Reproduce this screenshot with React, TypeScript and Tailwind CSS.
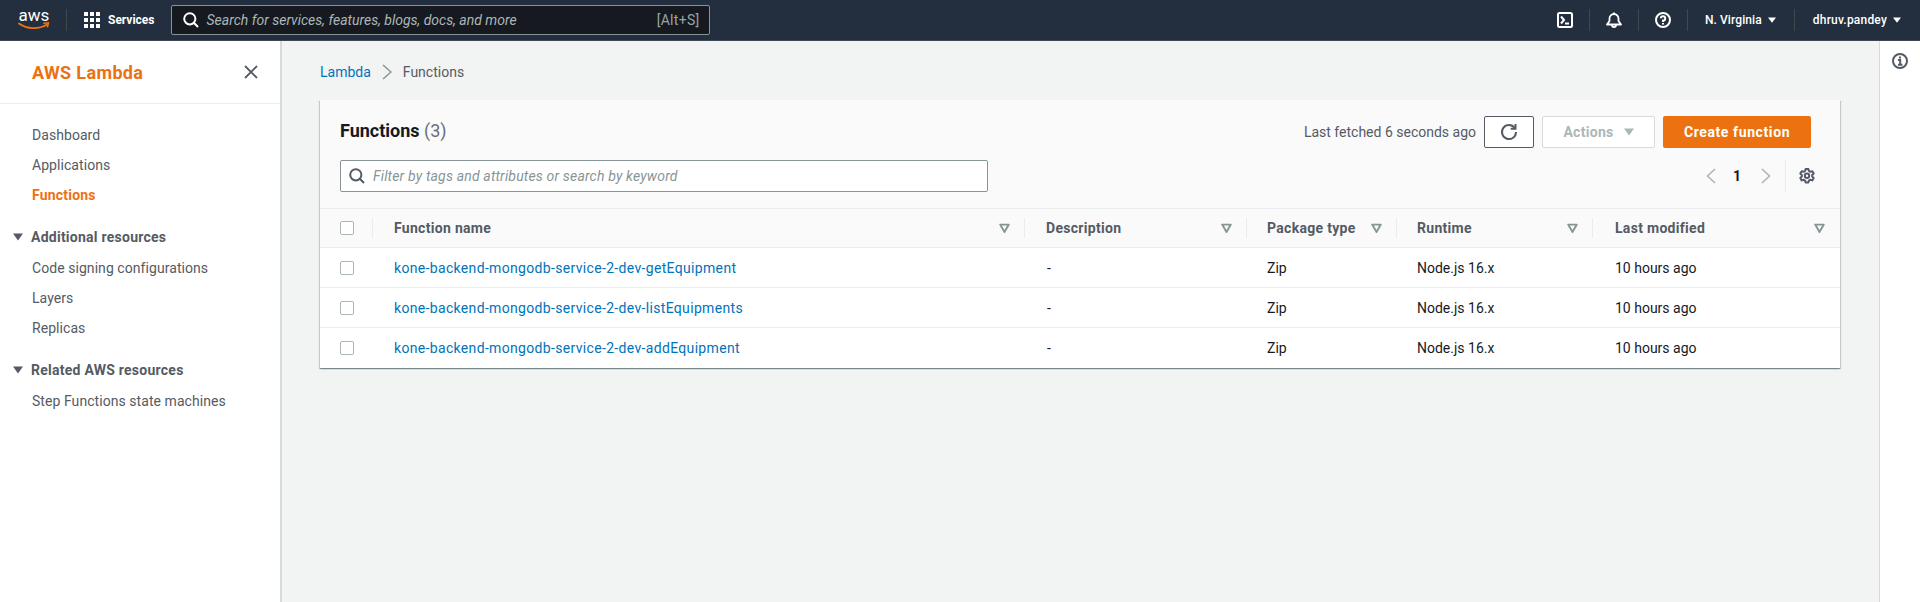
import React from "react";

const font = "font-['Roboto','Liberation_Sans',sans-serif]";
const row = "grid grid-cols-[53px_652px_222px_150px_196px_247px]";

function Caret({ className = "", small }: { className?: string; small?: boolean }) {
  return (
    <svg width={small ? 8 : 10} height={small ? 6 : 8} viewBox="0 0 10 8" preserveAspectRatio="none" className={className}>
      <path d="M0 0.5h10L5 7.5z" fill="currentColor" />
    </svg>
  );
}

function Sep() {
  return <div className="mx-[16px] h-[22px] w-px shrink-0 bg-[#414750]" />;
}

function AwsLogo() {
  return (
    <svg width="32" height="28" viewBox="0 0 32 28">
      <text x="16" y="15" textAnchor="middle" fontSize="17" fill="#fff" fontFamily="Roboto, sans-serif">aws</text>
      <path d="M1 17.5c8 6 20 6 28 1" fill="none" stroke="#ec7211" strokeWidth="1.8" strokeLinecap="round" />
      <path d="M26 17.3l4.5-.6-1 4" fill="none" stroke="#ec7211" strokeWidth="1.6" strokeLinecap="round" strokeLinejoin="round" />
    </svg>
  );
}

function GridIcon() {
  return (
    <svg width="16" height="16" viewBox="0 0 16 16" fill="#fff">
      {[0, 6, 12].flatMap((x) => [0, 6, 12].map((y) => <rect key={`${x}${y}`} x={x} y={y} width="4" height="4" />))}
    </svg>
  );
}

function SearchIcon({ color = "#fff" }: { color?: string }) {
  return (
    <svg width="16" height="16" viewBox="0 0 16 16" fill="none" stroke={color} strokeWidth="2">
      <circle cx="6.8" cy="6.8" r="5.6" />
      <path d="M10.8 10.8L15 15" />
    </svg>
  );
}

function FilterIcon() {
  return (
    <svg width="11" height="11" viewBox="0 0 11 11" fill="none" stroke="#879596" strokeWidth="1.9" className="shrink-0">
      <path d="M1.2 1.6h8.6L5.5 9z" strokeLinejoin="round" />
    </svg>
  );
}

function Check() {
  return <div className="h-[14px] w-[14px] rounded-[2px] border border-[#aab7b8] bg-white" />;
}

function Head({ label, sep = true, pad = "pl-5" }: { label: string; sep?: boolean; pad?: string }) {
  return (
    <div className={`relative flex h-[38px] items-center justify-between pr-[15px] ${pad}`}>
      <span className="text-[14px] font-bold tracking-[0.3px] text-[#545b64]">{label}</span>
      <FilterIcon />
      {sep && <div className="absolute right-0 top-[9px] h-[20px] w-px bg-[#eaeded]" />}
    </div>
  );
}

function DataRow({ name, last }: { name: string; last?: boolean }) {
  return (
    <div className={`${row} h-[40px] items-center text-[14px] text-[#16191f] ${last ? "" : "border-b border-[#eaeded] pt-px"}`}>
      <div className="pl-5"><Check /></div>
      <a className="pl-[21px] tracking-[0.33px] text-[#0073bb]">{name}</a>
      <div className="pl-[22px]">-</div>
      <div className="pl-5">Zip</div>
      <div className="pl-5">Node.js 16.x</div>
      <div className="pl-[22px]">10 hours ago</div>
    </div>
  );
}

const NavItem = ({ children, active }: { children: React.ReactNode; active?: boolean }) => (
  <div className={`flex h-[30px] items-center pl-8 text-[14px] ${active ? "font-bold tracking-[0.2px] text-[#ec7211]" : "tracking-[0.06px] text-[#545b64]"}`}>{children}</div>
);

const NavSection = ({ children }: { children: React.ReactNode }) => (
  <div className="mb-px mt-[12px] flex h-[30px] items-center pl-[13px] text-[14px] font-bold tracking-[0.25px] text-[#545b64]">
    <Caret className="mr-2" />
    {children}
  </div>
);

export default function App() {
  return (
    <div className={`${font} flex h-screen flex-col overflow-hidden bg-[#f2f3f3]`}>
      <header className="flex h-[41px] shrink-0 items-center border-b border-[#414750] bg-[#232f3e] text-white">
        <div className="ml-[18px] flex w-[32px] justify-center"><AwsLogo /></div>
        <div className="ml-[16px] h-[22px] w-px bg-[#414750]" />
        <div className="ml-[17px]"><GridIcon /></div>
        <span className="ml-2 text-[12px] font-bold">Services</span>
        <div className="ml-4 flex h-[30px] w-[539px] items-center rounded-[2px] border border-[#879596] bg-[#16191f] pl-[11px] pr-[9px] text-[14px]">
          <SearchIcon />
          <span className="ml-[8px] flex-1 italic text-[#aab7b8]">Search for services, features, blogs, docs, and more</span>
          <span className="tracking-[0.3px] text-[#95a5a6]">[Alt+S]</span>
        </div>
        <div className="ml-auto flex items-center pr-[19px] text-[12px] font-medium">
          <svg width="16" height="16" viewBox="0 0 16 16" fill="none" stroke="#fff" strokeWidth="2">
            <rect x="1" y="1" width="14" height="14" rx="1.5" />
            <path d="M4 4.5L7 8l-3 3.5M8 11.5h4" />
          </svg>
          <Sep />
          <svg width="16" height="16" viewBox="0 0 16 16" fill="none" stroke="#fff" strokeWidth="1.8">
            <path d="M1 12.5h14L12.5 9V6.5a4.5 4.5 0 00-9 0V9z" strokeLinejoin="round" />
            <path d="M6 13a2 2 0 004 0M8 .5v1.5" />
          </svg>
          <Sep />
          <svg width="16" height="16" viewBox="0 0 16 16" fill="none" stroke="#fff" strokeWidth="2">
            <circle cx="8" cy="8" r="7" />
            <path d="M5.8 6.3A2.2 2.2 0 118 8.6V10M8 11v1.6" />
          </svg>
          <Sep />
          <span className="ml-[1px] tracking-[0.1px]">N. Virginia</span>
          <Caret small className="ml-[6px] mr-[2px]" />
          <Sep />
          <span className="ml-[2px] tracking-[0.2px]">dhruv.pandey</span>
          <Caret small className="ml-[6px]" />
        </div>
      </header>

      <div className="flex min-h-0 flex-1">
        <aside className="w-[282px] shrink-0 border-r-2 border-[#d5dbdb] bg-white">
          <div className="flex h-[63px] items-center justify-between border-b border-[#eaeded] pl-8 pr-[22px]">
            <span className="text-[18px] font-bold tracking-[0.35px] text-[#ec7211]">AWS Lambda</span>
            <svg width="14" height="14" viewBox="0 0 14 14" stroke="#545b64" strokeWidth="1.8">
              <path d="M1 1l12 12M13 1L1 13" />
            </svg>
          </div>
          <nav className="pt-[16px]">
            <NavItem>Dashboard</NavItem>
            <NavItem>Applications</NavItem>
            <NavItem active>Functions</NavItem>
            <NavSection>Additional resources</NavSection>
            <NavItem>Code signing configurations</NavItem>
            <NavItem>Layers</NavItem>
            <NavItem>Replicas</NavItem>
            <NavSection>Related AWS resources</NavSection>
            <NavItem>Step Functions state machines</NavItem>
          </nav>
        </aside>

        <main className="min-w-0 flex-1 px-[38px] pt-[21px]">
          <nav className="flex h-[20px] items-center text-[14px]">
            <span className="text-[#0073bb]">Lambda</span>
            <svg width="10" height="16" viewBox="0 0 10 16" fill="none" stroke="#879596" strokeWidth="1.5" className="mx-[11px]">
              <path d="M1 1l8 7-8 7" />
            </svg>
            <span className="text-[#545b64]">Functions</span>
          </nav>
          <section className="mt-[18px] w-[1520px] bg-white shadow-[0_1px_1px_0_rgba(0,28,36,0.3),1px_1px_1px_0_rgba(0,28,36,0.15),-1px_1px_1px_0_rgba(0,28,36,0.15)]">
            <div className="h-[109px] border-b border-[#eaeded] bg-[#fafafa] pl-5 pr-[29px]">
              <div className="flex items-start justify-between pt-4">
                <h1 className="pt-[4px] text-[18px] font-bold leading-[22px] text-[#16191f]">
                  Functions <span className="font-normal text-[#687078]">(3)</span>
                </h1>
                <div className="flex items-center">
                  <span className="mr-2 text-[14px] text-[#545b64]">Last fetched 6 seconds ago</span>
                  <button className="flex h-[32px] w-[50px] items-center justify-center rounded-[2px] border border-[#545b64] bg-white">
                    <svg width="18" height="18" viewBox="0 0 18 18" fill="none" stroke="#545b64" strokeWidth="2">
                      <path d="M14.7 5A7 7 0 1016 9" />
                      <path d="M15.5 1v4.8h-4.8" />
                    </svg>
                  </button>
                  <button className="ml-2 flex h-[32px] w-[113px] items-center justify-center rounded-[2px] border border-[#d5dbdb] bg-white text-[14px] font-bold tracking-[0.3px] text-[#aab7b8]">
                    Actions
                    <Caret className="ml-[10px]" />
                  </button>
                  <button className="ml-2 h-[32px] w-[148px] rounded-[2px] bg-[#ec7211] text-[14px] font-bold tracking-[0.6px] text-white">Create function</button>
                </div>
              </div>
              <div className="mt-[12px] flex items-center justify-between">
                <div className="flex h-[32px] w-[648px] items-center rounded-[2px] border border-[#879596] bg-white pl-[8px] text-[14px] italic tracking-[0.17px] text-[#879596]">
                  <SearchIcon color="#545b64" />
                  <span className="ml-[8px]">Filter by tags and attributes or search by keyword</span>
                </div>
                <div className="flex items-center">
                  <svg width="10" height="16" viewBox="0 0 10 16" fill="none" stroke="#aab7b8" strokeWidth="1.6"><path d="M9 1L1.5 8 9 15" /></svg>
                  <span className="ml-[17px] mr-[20px] text-[14px] font-bold text-[#16191f]">1</span>
                  <svg width="10" height="16" viewBox="0 0 10 16" fill="none" stroke="#aab7b8" strokeWidth="1.6"><path d="M1 1l7.5 7L1 15" /></svg>
                  <div className="ml-[14px] h-[32px] w-px bg-[#eaeded]" />
                  <svg width="16" height="16" viewBox="0 0 16 16" fill="none" stroke="#545b64" strokeWidth="2" className="ml-[13px] mr-[-4px]">
                    <path d="M6.6 1h2.8l.5 2 1.4.8 2-.6 1.4 2.4-1.5 1.4v1.6l1.5 1.4-1.4 2.4-2-.6-1.4.8-.5 2H6.6l-.5-2-1.4-.8-2 .6-1.4-2.4L2.8 8.6V7L1.3 5.6l1.4-2.4 2 .6 1.4-.8z" strokeLinejoin="round" />
                    <circle cx="8" cy="7.8" r="2.2" />
                  </svg>
                </div>
              </div>
            </div>
            <div className={`${row} border-b border-[#eaeded] bg-[#fafafa]`}>
              <div className="relative flex h-[38px] items-center pl-5">
                <Check />
                <div className="absolute right-0 top-[9px] h-[20px] w-px bg-[#eaeded]" />
              </div>
              <Head label="Function name" pad="pl-[21px]" />
              <Head label="Description" pad="pl-[21px]" />
              <Head label="Package type" />
              <Head label="Runtime" />
              <Head label="Last modified" sep={false} pad="pl-[22px]" />
            </div>
            <DataRow name="kone-backend-mongodb-service-2-dev-getEquipment" />
            <DataRow name="kone-backend-mongodb-service-2-dev-listEquipments" />
            <DataRow name="kone-backend-mongodb-service-2-dev-addEquipment" last />
          </section>
        </main>

        <aside className="flex w-[41px] shrink-0 justify-center border-l border-[#d5dbdb] bg-white pt-[12px]">
          <svg width="16" height="16" viewBox="0 0 16 16" fill="none" stroke="#545b64" strokeWidth="2">
            <circle cx="8" cy="8" r="7" />
            <path d="M6 7h2.2v4.5M6 11.8h4.4M8 3.6v2" />
          </svg>
        </aside>
      </div>
    </div>
  );
}
